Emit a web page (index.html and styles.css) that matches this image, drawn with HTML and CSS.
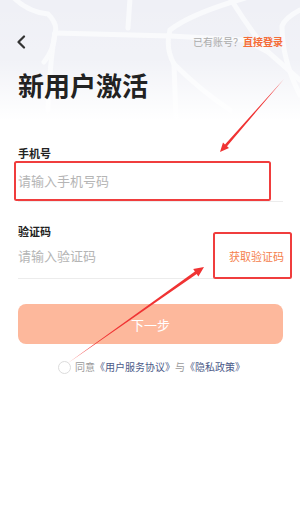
FILE: index.html
```html
<!DOCTYPE html>
<html lang="zh-CN">
<head>
<meta charset="utf-8">
<title>新用户激活</title>
<link rel="stylesheet" href="styles.css">
</head>
<body>
<div class="page">
  <svg class="map" width="300" height="150" viewBox="0 0 300 150">
    <defs>
      <linearGradient id="fade" x1="0" y1="0" x2="0" y2="1">
        <stop offset="0" stop-color="#fff" stop-opacity="0"/>
        <stop offset="0.4" stop-color="#fff" stop-opacity="0.15"/>
        <stop offset="0.8" stop-color="#fff" stop-opacity="1"/>
      </linearGradient>
    </defs>
    <rect width="300" height="150" fill="#eff0f6"/>
    <g fill="none" stroke="#f9fafc" stroke-width="5" stroke-linecap="round">
      <path d="M14 -2 Q28 12 48 14 Q58 24 55 33 Q54 50 44 62"/>
      <path d="M55 33 L170 36 L245 40"/>
      <path d="M130 -2 L128 28"/>
      <path d="M55 33 Q50 60 48 110"/>
      <path d="M245 -2 Q190 14 170 30 Q165 48 174 64 L176 120"/>
      <path d="M230 -2 Q250 30 268 52 L300 80"/>
      <path d="M300 10 Q285 18 282 26 Q282 60 300 95"/>
      <path d="M174 64 Q200 90 230 110"/>
      <path d="M245 40 L268 52"/>
    </g>
    <rect width="300" height="150" fill="url(#fade)"/>
  </svg>

  <div class="content">
    <header class="topbar">
      <svg class="back" width="10" height="14" viewBox="0 0 10 14">
        <path d="M8 1.5 L2.5 7 L8 12.5" fill="none" stroke="#333" stroke-width="2.2" stroke-linecap="round" stroke-linejoin="round"/>
      </svg>
      <div class="have-account">已有账号？<span class="login-link">直接登录</span></div>
    </header>

    <h1 class="title">新用户激活</h1>

    <label class="field-label">手机号</label>
    <div class="field-row">
      <input class="field-input" type="text" placeholder="请输入手机号码">
    </div>

    <label class="field-label second">验证码</label>
    <div class="field-row code-row">
      <input class="field-input" type="text" placeholder="请输入验证码">
      <span class="get-code">获取验证码</span>
    </div>

    <button class="next-btn" type="button">下一步</button>

    <div class="agreement">
      <span class="check"></span>
      <span class="muted">同意</span><span class="link">《用户服务协议》</span><span class="muted">与</span><span class="link">《隐私政策》</span>
    </div>
  </div>

  <svg class="annotations" width="300" height="530" viewBox="0 0 300 530">
    <rect x="15" y="162" width="255" height="38" rx="1.5" fill="none" stroke="#f03d3d" stroke-width="2"/>
    <rect x="214" y="233" width="77" height="45" rx="1.5" fill="none" stroke="#f03d3d" stroke-width="2"/>
    <polygon points="284,79 227.0,146.2 229.0,147.9 220,152 223.0,142.6 225.0,144.4" fill="#f03333"/>
    <polygon points="68,363 196.7,274.0 198.4,276.5 204,267 193.2,269.1 194.9,271.6" fill="#f03333"/>
  </svg>
</div>
</body>
</html>
```

FILE: styles.css
```css
* { box-sizing: border-box; }
html, body { margin: 0; padding: 0; background: #fff; }
body {
  font-family: "Noto Sans CJK SC", "Noto Sans", sans-serif;
  color: #222;
}
.page {
  position: relative;
  width: 300px;
  height: 530px;
  overflow: hidden;
  background: #fff;
}
.map {
  position: absolute;
  left: 0;
  top: 0;
  display: block;
}
.annotations {
  position: absolute;
  left: 0;
  top: 0;
  pointer-events: none;
}
.content {
  position: relative;
  padding: 32px 17px 0 18px;
  display: flex;
  flex-direction: column;
}
.topbar {
  height: 20px;
  display: flex;
  align-items: center;
  justify-content: space-between;
}
.back { display: block; margin-left: -2px; }
.have-account {
  font-size: 10px;
  line-height: 14px;
  color: #ababab;
}
.login-link { color: #f56d38; font-weight: 700; }
.title {
  margin: 15px 0 0;
  font-size: 26px;
  line-height: 36px;
  font-weight: 700;
  color: #222;
}
.field-label {
  display: block;
  margin-top: 42px;
  font-size: 11px;
  line-height: 16px;
  font-weight: 700;
  color: #222;
}
.field-label.second { margin-top: 21px; }
.field-row {
  height: 41px;
  display: flex;
  align-items: center;
  padding-bottom: 2px;
  border-bottom: 1px solid #ececec;
}
.code-row {
  height: 40px;
  padding-bottom: 6px;
}
.field-input {
  flex: 1;
  min-width: 0;
  border: none;
  outline: none;
  background: transparent;
  padding: 0;
  font-family: inherit;
  font-size: 13px;
  color: #333;
}
.field-input::placeholder { color: #b5b5b5; }
.get-code {
  font-size: 11px;
  line-height: 16px;
  color: #f5804c;
  margin-right: -1px;
}
.next-btn {
  margin-top: 25px;
  height: 40px;
  border: none;
  border-radius: 8px;
  background: #fdb89c;
  color: #fff;
  font-family: inherit;
  font-size: 13px;
  padding: 0;
}
.agreement {
  margin-top: 16px;
  display: flex;
  align-items: center;
  justify-content: center;
  font-size: 10px;
  line-height: 14px;
  padding-left: 2px;
}
.check {
  width: 13px;
  height: 13px;
  border: 1px solid #dcdcdc;
  border-radius: 50%;
  margin-right: 4px;
  background: #fff;
}
.muted { color: #9a9a9a; }
.link { color: #4b5a88; }
```
